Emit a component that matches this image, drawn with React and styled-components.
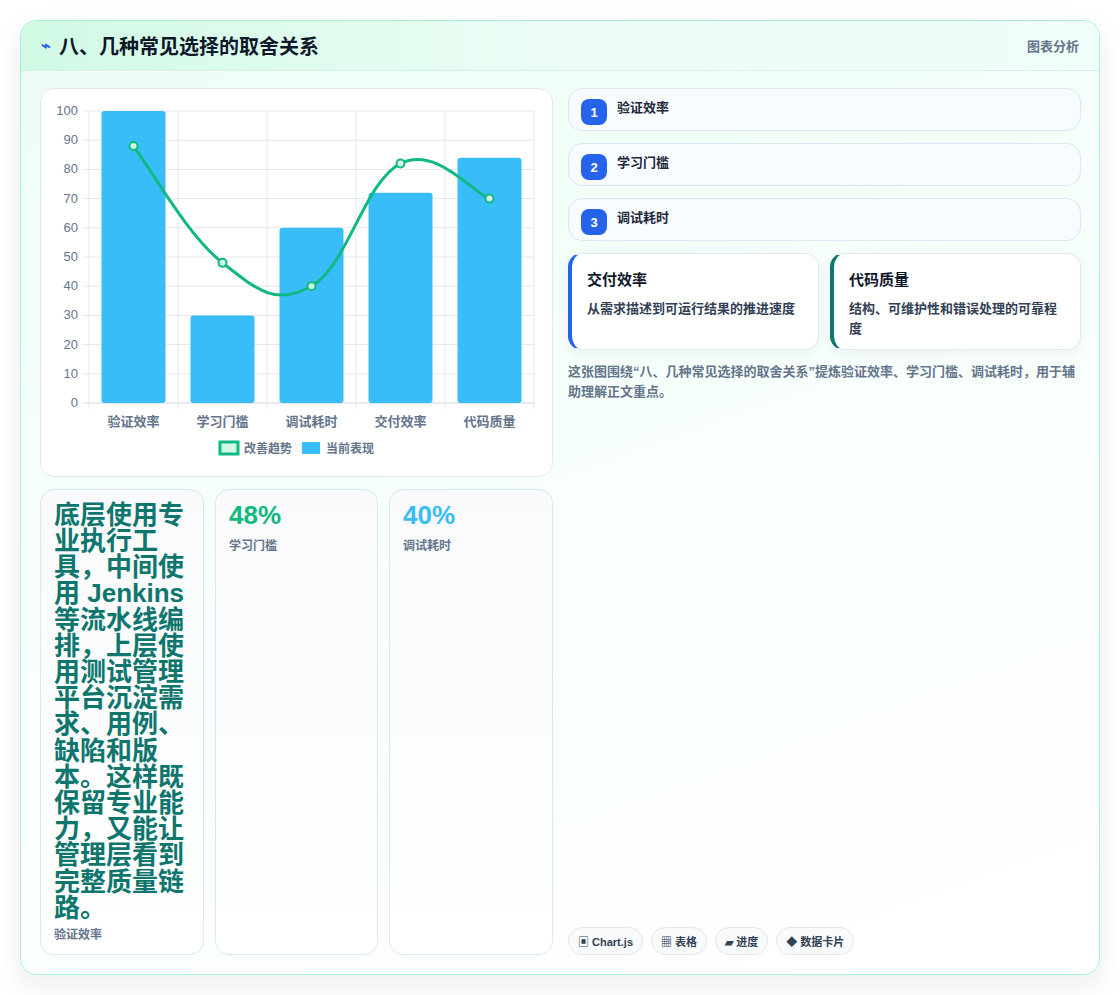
import React from "react";
import styled, { createGlobalStyle } from "styled-components";

const G = createGlobalStyle`
  body { margin:0; background:#fff; font-family:"Liberation Sans","Noto Sans CJK SC",sans-serif; }
`;
const Page = styled.div`padding:20px; box-sizing:border-box; width:1120px; height:995px;`;
const Card = styled.div`
  height:955px; box-sizing:border-box; border:1px solid #a7f3d0; border-radius:16px;
  background:linear-gradient(160deg,#ecfdf5 0%,#f8fffc 50%,#ffffff 100%);
  box-shadow:0 10px 30px rgba(15,23,42,.08); display:flex; flex-direction:column; overflow:hidden;
`;
const Header = styled.div`
  height:55px; box-sizing:border-box; display:flex; align-items:center; justify-content:space-between;
  padding:0 20px; border-bottom:1px solid #d6f1ea;
  background:linear-gradient(90deg,#d1fae5,#ecfdf5 50%,#f0fdfa);
`;
const Title = styled.h1`margin:0; font-size:20px; font-weight:700; color:#0f172a; display:flex; gap:8px; align-items:center;`;
const Bolt = styled.span`color:#2563eb; font-size:16px;`;
const Tag = styled.span`font-size:13px; font-weight:700; color:#64748b;`;
const Body = styled.div`flex:1; display:grid; grid-template-columns:513px 513px; gap:15px; padding:17px 19px 19px 19px;`;
const Col = styled.div`display:flex; flex-direction:column; gap:12px; min-height:0;`;
const Panel = styled.div`background:#fff; border:1px solid #e2e8f0; border-radius:14px;`;
const ChartPanel = styled(Panel)`height:389px; box-sizing:border-box; position:relative;`;
const Row3 = styled.div`flex:1; display:grid; grid-template-columns:164px 163px 164px; gap:11px;`;
const Stat = styled.div`
  border:1px solid #dbe7f3; border-radius:14px; padding:12px 13px; box-sizing:border-box;
  background:linear-gradient(180deg,#f8fafc,#fff);
`;
const BigText = styled.div`font-size:26px; line-height:26.2px; font-weight:700; color:#0f766e; word-break:break-all;`;
const Num = styled.div`font-size:26px; font-weight:700; color:${p=>p.c}; line-height:26px;`;
const SLabel = styled.div`font-size:12px; font-weight:700; color:#64748b; margin-top:${p=>p.m||8}px;`;
const Item = styled.div`
  height:43px; box-sizing:border-box; border:1px solid #dbe7f3; border-radius:14px; background:#f8fbff;
  display:flex; align-items:center; gap:10px; padding:0 12px; font-size:13px; font-weight:700; color:#1e293b;
`;
const Badge = styled.span`
  width:26px; height:26px; border-radius:8px; background:#2563eb; color:#fff; font-size:13px; font-weight:700;
  display:flex; align-items:center; justify-content:center; margin-top:6px;
`;
const ItemText = styled.span`margin-top:-6px;`;
const Two = styled.div`display:grid; grid-template-columns:1fr 1fr; gap:11px;`;
const Note = styled.div`
  height:97px; box-sizing:border-box; background:#fff; border:1px solid #e2e8f0; border-left:4px solid ${p=>p.c};
  border-radius:14px; padding:14px 14px 14px 15px; box-shadow:0 4px 14px rgba(15,23,42,.05);
`;
const NT = styled.div`font-size:15px; font-weight:700; color:#0f172a; margin-bottom:10px;`;
const ND = styled.div`font-size:13px; font-weight:700; color:#334155; line-height:20px;`;
const Desc = styled.div`font-size:13px; font-weight:700; color:#64748b; line-height:20px;`;
const Chips = styled.div`margin-top:auto; display:flex; gap:8px;`;
const Chip = styled.span`
  height:28px; box-sizing:border-box; padding:0 9px; border:1px solid #e2e8f0; border-radius:14px; background:#f8fafc;
  display:flex; align-items:center; font-size:11px; font-weight:700; color:#334155;
`;

const vals=[100,30,60,72,84], line=[88,48,40,82,70], cats=["验证效率","学习门槛","调试耗时","交付效率","代码质量"];
const X0=48,X1=493,Y0=22,Y1=314, cw=(X1-X0)/5;
const y=v=>Y1-(v/100)*(Y1-Y0), cx=i=>X0+cw*(i+.5);
function path(){
  const p=line.map((v,i)=>[cx(i),y(v)]); let d=`M${p[0][0]},${p[0][1]}`;
  for(let i=0;i<p.length-1;i++){
    const a=p[i-1]||p[i],b=p[i],c=p[i+1],e=p[i+2]||c,t=0.4/1.0/2.5*1.25;
    const c1=[b[0]+(c[0]-a[0])*t,b[1]+(c[1]-a[1])*t],c2=[c[0]-(e[0]-b[0])*t,c[1]-(e[1]-b[1])*t];
    d+=` C${c1[0]},${c1[1]} ${c2[0]},${c2[1]} ${c[0]},${c[1]}`;
  }
  return d;
}
function Chart(){
  return <svg width="511" height="387" style={{display:"block"}}>
    {[...Array(11)].map((_,k)=><g key={k}><line x1={X0-6} x2={X1} y1={y(k*10)} y2={y(k*10)} stroke={k?"#e5e7eb":"#cbd5e1"}/>
      <text x={X0-11} y={y(k*10)+4} textAnchor="end" fontSize="13" fill="#64748b" fontFamily="Liberation Sans">{k*10}</text></g>)}
    {[...Array(6)].map((_,k)=><line key={k} x1={X0+cw*k} x2={X0+cw*k} y1={Y0} y2={Y1+6} stroke="#e5e7eb"/>)}
    {vals.map((v,i)=><rect key={i} x={cx(i)-32} width="64" y={y(v)} height={Y1-y(v)} rx="3" fill="#38bdf8"/>)}
    <path d={path()} fill="none" stroke="#10b981" strokeWidth="3"/>
    {line.map((v,i)=><circle key={i} cx={cx(i)} cy={y(v)} r="4" fill="#d1fae5" stroke="#10b981" strokeWidth="2"/>)}
    {cats.map((c,i)=><text key={i} x={cx(i)} y={337} textAnchor="middle" fontSize="13" fontWeight="700" fill="#64748b" fontFamily="Liberation Sans,Noto Sans CJK SC">{c}</text>)}
    <rect x="179" y="353" width="18" height="12" fill="#d1fae5" stroke="#10b981" strokeWidth="3"/>
    <text x="203" y="364" fontSize="12" fontWeight="700" fill="#64748b" fontFamily="Liberation Sans,Noto Sans CJK SC">改善趋势</text>
    <rect x="261" y="353" width="18" height="12" fill="#38bdf8"/>
    <text x="285" y="364" fontSize="12" fontWeight="700" fill="#64748b" fontFamily="Liberation Sans,Noto Sans CJK SC">当前表现</text>
  </svg>;
}

export default function App(){
  return <Page><G/><Card>
    <Header><Title><Bolt>⌁</Bolt>八、几种常见选择的取舍关系</Title><Tag>图表分析</Tag></Header>
    <Body>
      <Col>
        <ChartPanel><Chart/></ChartPanel>
        <Row3>
          <Stat><BigText>底层使用专业执行工具，中间使用 Jenkins 等流水线编排，上层使用测试管理平台沉淀需求、用例、缺陷和版本。这样既保留专业能力，又能让管理层看到完整质量链路。</BigText><SLabel m={4}>验证效率</SLabel></Stat>
          <Stat><Num c="#10b981">48%</Num><SLabel>学习门槛</SLabel></Stat>
          <Stat><Num c="#38bdf8">40%</Num><SLabel>调试耗时</SLabel></Stat>
        </Row3>
      </Col>
      <Col>
        {["验证效率","学习门槛","调试耗时"].map((t,i)=><Item key={t}><Badge>{i+1}</Badge><ItemText>{t}</ItemText></Item>)}
        <Two>
          <Note c="#2563eb"><NT>交付效率</NT><ND>从需求描述到可运行结果的推进速度</ND></Note>
          <Note c="#0f766e"><NT>代码质量</NT><ND>结构、可维护性和错误处理的可靠程度</ND></Note>
        </Two>
        <Desc>这张图围绕“八、几种常见选择的取舍关系”提炼验证效率、学习门槛、调试耗时，用于辅助理解正文重点。</Desc>
        <Chips><Chip>▣ Chart.js</Chip><Chip>▦ 表格</Chip><Chip>▰ 进度</Chip><Chip>◆ 数据卡片</Chip></Chips>
      </Col>
    </Body>
  </Card></Page>;
}
